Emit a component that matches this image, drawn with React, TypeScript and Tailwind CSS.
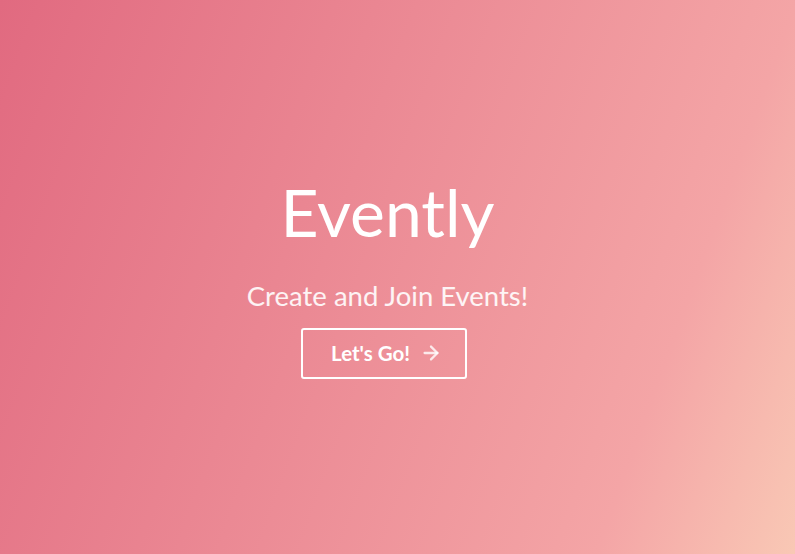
import { ArrowRight } from "lucide-react";

export default function App() {
  return (
    <main className="flex h-[554px] w-full items-center justify-center bg-[linear-gradient(110deg,#e16a80_0%,#f4a5a6_80%,#f9c8b5_100%)] pr-[20px] font-['Lato','Open_Sans',sans-serif] text-white">
      <div className="flex translate-y-[2px] flex-col items-center">
        <h1 className="text-[66px] leading-none font-normal">Evently</h1>
        <p className="mt-[37px] text-[27.5px] leading-none text-white/90">
          Create and Join Events!
        </p>
        <button
          type="button"
          className="mt-[18px] mr-[8px] flex h-[51px] w-[166px] items-center justify-center gap-[10px] rounded-[3px] border-2 border-white pl-[6px] text-[20.5px] font-bold"
        >
          Let's Go!
          <ArrowRight className="h-[22px] w-[22px] text-white/80" strokeWidth={2.5} />
        </button>
      </div>
    </main>
  );
}
